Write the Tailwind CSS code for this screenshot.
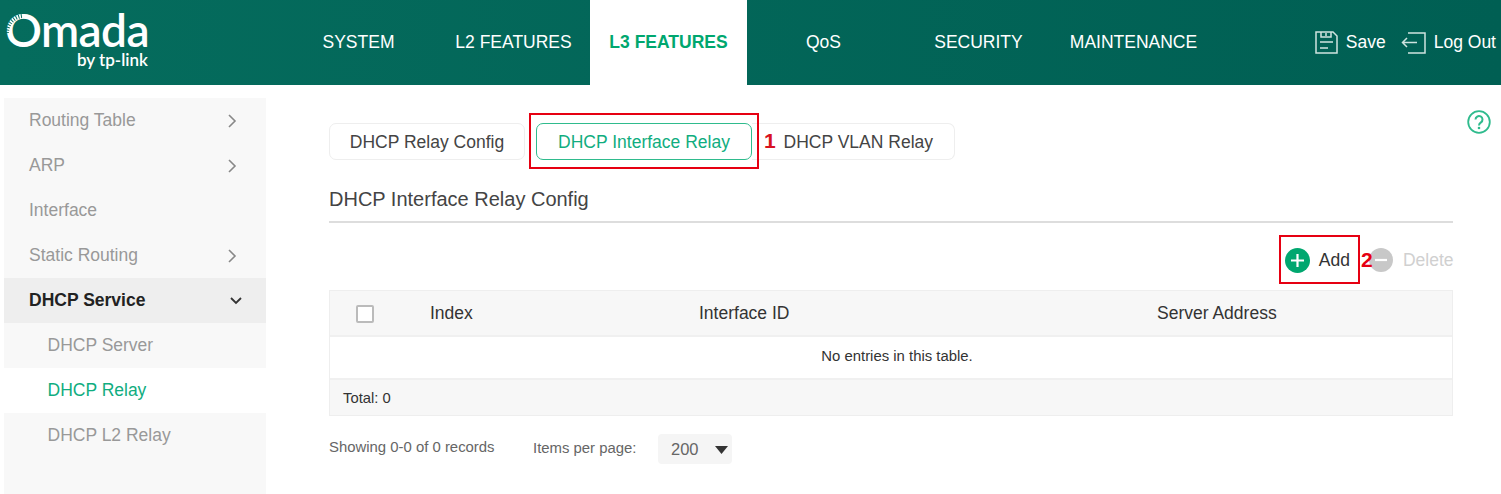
<!DOCTYPE html>
<html lang="en">
<head>
  <meta charset="UTF-8" />
  <title>Omada - DHCP Interface Relay</title>
  <script src="https://cdn.jsdelivr.net/npm/@tailwindcss/browser@4"></script>
</head>
<body class="relative w-[1501px] h-[494px] overflow-hidden bg-white font-['Liberation_Sans',Arial,sans-serif] text-[#333]">

  <!-- top bar -->
  <header class="flex h-[85px] bg-linear-to-r from-[#056c5d] to-[#005f53] text-white">
    <div class="relative w-[281px] shrink-0 pl-[5px] pt-[8px] font-['Lato',sans-serif]">
      <div class="text-[46px] leading-[43px] font-semibold tracking-[-0.6px]">Omada</div>
      <div class="pl-[72px] text-[17px] leading-[17px] font-semibold">by tp-link</div>
      <!-- hatch on the logo ring -->
      <svg class="absolute left-[4px] top-[13px] w-[24px] h-[24px]" viewBox="0 0 24 24" fill="none">
        <path d="M3 20A17 17 0 0 1 19 3" stroke="#056c5d" stroke-width="4" stroke-dasharray="1 1.600" />
      </svg>
    </div>
    <nav class="flex text-[17.500px]">
      <a class="w-[155px] flex items-center justify-center">SYSTEM</a>
      <a class="w-[155px] flex items-center justify-center">L2 FEATURES</a>
      <a class="w-[157px] -mx-px flex items-center justify-center bg-white text-[#00a76f] font-bold">L3 FEATURES</a>
      <a class="w-[155px] flex items-center justify-center">QoS</a>
      <a class="w-[155px] flex items-center justify-center">SECURITY</a>
      <a class="w-[155px] flex items-center justify-center">MAINTENANCE</a>
    </nav>
    <div class="ml-auto flex items-center pr-[5px] text-[17.500px]">
      <svg class="w-[23px] h-[23px]" viewBox="0 0 23 23" fill="none" stroke="#cfe3df" stroke-width="1.500">
        <path d="M1 1h17l4 4v17H1z" />
        <path d="M6 1v5h10V1M11 2v3M5 11h13M5 17h8" />
      </svg>
      <span class="ml-[8px]">Save</span>
      <svg class="ml-[15px] w-[25px] h-[22px]" viewBox="0 0 25 22" fill="none" stroke="#cfe3df" stroke-width="1.500">
        <path d="M7 1h17v20H7M16 10.500H1.500M6 6l-4.500 4.500L6 15" />
      </svg>
      <span class="ml-[8px]">Log Out</span>
    </div>
  </header>

  <div class="flex">
    <!-- side menu -->
    <aside class="ml-[4px] mt-[13px] w-[262px] h-[396px] shrink-0 bg-[#f8f8f8] text-[17.500px] text-[#999]">
      <div class="flex h-[45px] items-center justify-between pl-[25px] pr-[29px]">Routing Table
        <svg class="w-[10px] h-[14px]" viewBox="0 0 10 14" fill="none" stroke="#888" stroke-width="1.600"><path d="M2 1l6 6-6 6" /></svg>
      </div>
      <div class="flex h-[45px] items-center justify-between pl-[25px] pr-[29px]">ARP
        <svg class="w-[10px] h-[14px]" viewBox="0 0 10 14" fill="none" stroke="#888" stroke-width="1.600"><path d="M2 1l6 6-6 6" /></svg>
      </div>
      <div class="flex h-[45px] items-center pl-[25px]">Interface</div>
      <div class="flex h-[45px] items-center justify-between pl-[25px] pr-[29px]">Static Routing
        <svg class="w-[10px] h-[14px]" viewBox="0 0 10 14" fill="none" stroke="#888" stroke-width="1.600"><path d="M2 1l6 6-6 6" /></svg>
      </div>
      <div class="flex h-[45px] items-center justify-between pl-[25px] pr-[23px] bg-[#eeeeee] font-bold text-[#222]">DHCP Service
        <svg class="w-[14px] h-[10px]" viewBox="0 0 14 10" fill="none" stroke="#333" stroke-width="1.800"><path d="M2 2l5 5 5-5" /></svg>
      </div>
      <div class="flex h-[45px] items-center pl-[43.500px]">DHCP Server</div>
      <div class="flex h-[45px] items-center pl-[43.500px] bg-white text-[#10ad80]">DHCP Relay</div>
      <div class="flex h-[45px] items-center pl-[43.500px]">DHCP L2 Relay</div>
    </aside>

    <!-- content -->
    <main class="ml-[63px] w-[1124px] shrink-0 pt-[38px]">
      <div class="flex h-[37px] text-[17.500px] text-[#444]">
        <div class="w-[196px] flex items-center justify-center pt-[1px] rounded-[7px] border-[1.500px] border-[#eeeeee]">DHCP Relay Config</div>
        <div class="ml-[11px] w-[216px] flex items-center justify-center pt-[1px] rounded-[7px] border-[1.500px] border-[#2fbb8d] text-[#10ad80]">DHCP Interface Relay</div>
        <div class="w-[203px] flex items-center justify-end pt-[1px] pr-[21px] rounded-r-[7px] border-[1.500px] border-l-0 border-[#eeeeee]">DHCP VLAN Relay</div>
      </div>

      <h2 class="mt-[27px] pb-[9px] border-b-2 border-[#dddddd] text-[20px] leading-[25px] font-normal text-[#444]">DHCP Interface Relay Config</h2>

      <div class="flex h-[67px] items-center justify-end pt-[7px] -mr-[0.500px] text-[17.500px]">
        <svg class="w-[25px] h-[25px]" viewBox="0 0 25 25">
          <circle cx="12.500" cy="12.500" r="12.500" fill="#00a76f" />
          <path d="M12.500 6v13M6 12.500h13" stroke="#fff" stroke-width="2.200" />
        </svg>
        <span class="ml-[9px] text-[#333]">Add</span>
        <svg class="ml-[19px] w-[24px] h-[24px]" viewBox="0 0 24 24">
          <circle cx="12" cy="12" r="12" fill="#c8c8c8" />
          <path d="M6 12h12" stroke="#fff" stroke-width="2.200" />
        </svg>
        <span class="ml-[10px] text-[#d0d0d0]">Delete</span>
      </div>

      <div class="border border-[#eeeeee]">
        <div class="flex h-[46px] items-center pt-[1px] bg-[#f7f7f7] border-b-2 border-[#f0f0f0] text-[17.500px]">
          <span class="ml-[26px] w-[18px] h-[18px] rounded-[2px] border-2 border-[#bbbbbb] bg-white"></span>
          <span class="ml-[56px] w-[269px]">Index</span>
          <span class="w-[458px]">Interface ID</span>
          <span>Server Address</span>
        </div>
        <div class="flex h-[41px] items-center justify-center pl-[12px] pb-[2px] bg-white text-[14.900px]">No entries in this table.</div>
        <div class="flex h-[37px] items-center pl-[13px] pt-[1px] bg-[#f7f7f7] border-t-2 border-[#f0f0f0] text-[14.800px]">Total: 0</div>
      </div>

      <div class="mt-[18px] flex items-center text-[14.900px] text-[#666]">
        <span class="w-[204px] mb-[3px]">Showing 0-0 of 0 records</span>
        <span class="w-[125px] mb-[1px]">Items per page:</span>
        <div class="flex w-[74px] h-[30px] items-center rounded-[4px] bg-[#f5f5f5] pl-[13px] text-[16.500px]">200
          <svg class="ml-[16px] mt-[2px] w-[13px] h-[8px]" viewBox="0 0 13 8"><path d="M0 0h13L6.500 8z" fill="#333" /></svg>
        </div>
      </div>
    </main>
  </div>

  <!-- help icon -->
  <svg class="absolute left-[1466.500px] top-[110px] w-[24px] h-[24px]" viewBox="0 0 24 24" fill="none">
    <circle cx="12" cy="12" r="10.800" stroke="#2fbb8d" stroke-width="1.800" />
    <path d="M8.500 9.500a3.500 3.500 0 1 1 5.500 2.900c-1.300.9-2 1.500-2 3" stroke="#2fbb8d" stroke-width="2" />
    <circle cx="12" cy="18" r="1.300" fill="#2fbb8d" />
  </svg>

  <!-- red annotations laid over the screenshot -->
  <div class="absolute left-[529px] top-[113px] w-[230px] h-[56px] border-2 border-[#e60012]"></div>
  <span class="absolute left-[764px] top-[129px] text-[21px] leading-[24px] font-bold text-[#d8121f]">1</span>
  <div class="absolute left-[1279px] top-[235px] w-[81px] h-[49px] border-2 border-[#e60012]"></div>
  <span class="absolute left-[1361px] top-[248px] text-[21px] leading-[24px] font-bold text-[#e60012]">2</span>
</body>
</html>
